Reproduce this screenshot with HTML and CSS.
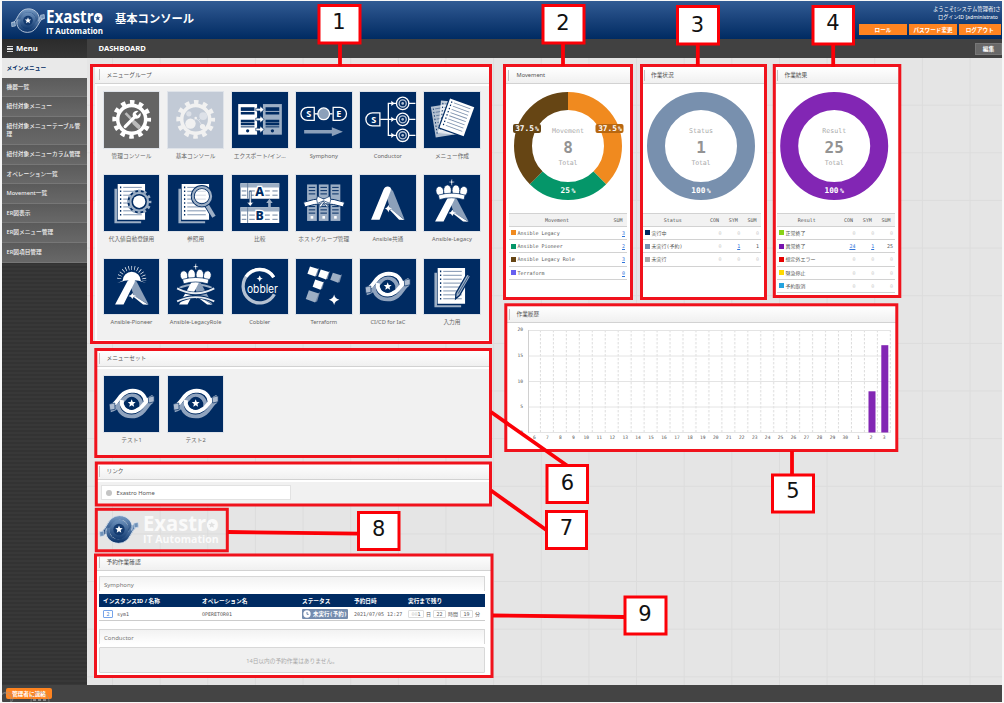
FILE: index.html
```html
<!DOCTYPE html>
<html lang="ja">
<head>
<meta charset="utf-8">
<title>Exastro IT Automation</title>
<link rel="stylesheet" href="styles.css">
</head>
<body>
<svg class="defs" width="0" height="0">
  <defs>
    <linearGradient id="blue" x1="0" y1="0" x2="0" y2="1"><stop offset="0" stop-color="#6f93bd"/><stop offset="1" stop-color="#123a70"/></linearGradient>
    <path id="spark" d="M0-12Q2-2 12 0Q2 2 0 12Q-2 2-12 0Q-2-2 0-12Z"/>
    <path id="star" d="M0-11L2.9-3.9 10.5-3.4 4.7 1.5 6.5 8.9 0 4.9-6.5 8.9-4.7 1.5-10.5-3.4-2.9-3.9Z"/>
    <g id="gear"><circle r="43" fill="none" stroke-width="11" stroke="currentColor"/><circle r="53" fill="none" stroke-width="13" stroke="currentColor" stroke-dasharray="14 13.75" stroke-dashoffset="7"/></g>
    <g id="crown"><ellipse cx="-33" cy="-3" rx="11" ry="14" transform="rotate(-14 -33 0)"/><ellipse cx="33" cy="-3" rx="11" ry="14" transform="rotate(14 33 0)"/><ellipse cx="-12" cy="-5" rx="11" ry="16"/><ellipse cx="12" cy="-5" rx="11" ry="16"/><path d="M-38 8Q0-3 38 8L35 21Q0 10-35 21Z"/><path d="M-2-37H2V-31H7V-27H2V-20H-2V-27H-7V-31H-2Z"/></g>
    <g id="letterA"><path fill="#8ca0ba" d="M85 38Q96 38 102 51L137 137 92 103 78 52Z"/><path fill="#fff" d="M72 45Q77 34 86 35 98 36 94 49L60 137H34Z"/><use href="#spark" x="87" y="103" fill="#fff"/><path fill="#fff" d="M91 107L96 105 136 138 120 137Z"/></g>
    <g id="sheet"><path d="M0 0H84V109H0Z" fill="#fff"/><path d="M17 10H74M17 22H74M17 34H74M17 46H74M17 58H74M17 70H74M17 82H74M17 94H74" stroke="#7d91ae" stroke-width="3"/><path d="M7 10H11M7 22H11M7 34H11M7 46H11M7 58H11M7 70H11M7 82H11M7 94H11" stroke="#002b62" stroke-width="5"/></g>
    <g id="docs"><path d="M32 42H40V142H114V148H32Z" fill="#9dafc5"/><use href="#sheet" x="42" y="28"/></g>
    <g id="eye" fill="none">
      <path stroke="#8fa3be" stroke-width="12" d="M150 77C130 82 128 123 85 124 56 124 42 105 43 84"/>
      <path stroke="#8fa3be" stroke-width="12" d="M20 105C52 100 52 62 86 60 106 60 117 76 114 94"/>
      <path stroke="#fff" stroke-width="12" d="M18 93C45 88 45 46 88 45 112 45 127 60 128 80"/>
      <path stroke="#fff" stroke-width="12" d="M150 65C124 70 121 108 85 109 62 109 52 92 55 74"/>
      <path fill="#aebcd0" stroke="#002b62" stroke-width="2" d="M16 86L33 83 34 102 18 105ZM136 65L154 61 154 79 137 83Z"/>
      <circle cx="85" cy="84" r="20" fill="#002b62"/><use href="#star" fill="#fff" transform="translate(85 84) scale(1.15)"/>
    </g>
    <g id="server"><path d="M0 0H58V94H0Z"/><path d="M8 14H50M8 28H50M8 52H50M8 61H50" stroke="#002b62" stroke-width="8"/><path d="M8 70H50M8 20H50" stroke="#002b62" stroke-width="3"/><circle cx="29" cy="82" r="5" fill="#002b62"/></g>
    <g id="tbl"><path fill="#fff" d="M0 0H119V48H0Z"/><path fill="#9dafc5" d="M0 0H119V13H0Z"/><path stroke="#6b819f" stroke-width="3" d="M4 24H18M27 24H44M75 24H90M98 24H114M4 37H18M27 37H44M75 37H90M98 37H114M22 0V48"/></g>
    <g id="rack"><path fill="#9dafc5" d="M0 0H30V112H0Z"/><path stroke="#002b62" stroke-width="3" d="M5 9H25M5 19H25M5 29H25M5 68H25M5 78H25M5 88H25"/><path fill="#fff" d="M11 97H19V105H11Z"/></g>
    <g id="node"><circle r="19" fill="#002b62" stroke="#fff" stroke-width="4"/><circle r="11" fill="none" stroke="#b7c5d6" stroke-width="4"/><circle r="4" fill="#b7c5d6"/></g>
    <g id="cube"><path fill="#7186a4" d="M31 8L36 5 29 29 23 30Z"/><path d="M8 0L33 8 24 31 0 22Z"/></g>
    <g id="logo"><circle cx="85" cy="84" r="42" fill="url(#blue)"/><path d="M4 105C40 102 36 35 86 34 122 34 140 64 130 91" fill="none" stroke="url(#blue)" stroke-width="17"/><path d="M166 63C130 66 134 133 84 134 48 134 30 104 40 77" fill="none" stroke="url(#blue)" stroke-width="17"/><path d="M3 96C36 92 32 25 87 25 125 25 148 57 139 88" fill="none" stroke="#d5e0ec" stroke-width="4"/><path d="M167 72C134 76 138 143 83 143 45 143 22 111 31 80" fill="none" stroke="#d5e0ec" stroke-width="4"/><circle cx="85" cy="84" r="24" fill="#143b70"/><path d="M3 93L20 91 22 111 4 114ZM148 57L166 54 167 74 150 77Z" fill="#6e91b8" stroke="#d5e0ec" stroke-width="3"/><use href="#star" fill="#fff" transform="translate(85 84) scale(1.5)"/></g>
    <g id="brand"><text class="brand" x="0" y="15" font-size="17.5" textLength="57" lengthAdjust="spacingAndGlyphs">Exastro</text><text class="brand" x="0" y="25.5" font-size="9.2" textLength="57" lengthAdjust="spacingAndGlyphs">IT Automation</text></g>
  </defs>
</svg>

<div class="app">
  <header class="top">
    <svg class="top-logo" viewBox="0 0 170 140"><use href="#logo" y="-16"/></svg>
    <svg class="top-brand" viewBox="0 0 58 28" fill="#fff"><use href="#brand"/><circle cx="51.8" cy="10.2" r="3.6"/><use href="#star" fill="#1f4880" transform="translate(51.8 10.2) scale(.25)"/></svg>
    <h1>基本コンソール</h1>
    <div class="account">
      <div class="welcome">ようこそ[システム管理者]さ</div>
      <div class="welcome second">ログインID [administrato</div>
      <div class="actions"><button>ロール</button><button>パスワード変更</button><button>ログアウト</button></div>
    </div>
  </header>
  <div class="bar"><div class="bar-menu"><i class="burger"></i>Menu</div><div class="bar-title">DASHBOARD</div><button class="edit">編集</button></div>
  <div class="body">
    <nav class="side">
      <a class="on">メインメニュー</a><a>機器一覧</a><a>紐付対象メニュー</a><a class="two">紐付対象メニューテーブル管理</a><a>紐付対象メニューカラム管理</a><a>オペレーション一覧</a><a>Movement一覧</a><a>ER図表示</a><a>ER図メニュー管理</a><a>ER図項目管理</a>
    </nav>
    <main>
      <div class="left">
        <section class="widget group">
          <h2>メニューグループ</h2>
          <div class="tiles">
            <figure><svg class="grey" viewBox="0 0 170 170"><use href="#gear" x="85" y="84" color="#fff"/><path d="M66 65L107 107" stroke="#bbb" stroke-width="8"/><path d="M93 94L106 107" stroke="#bbb" stroke-width="13" stroke-linecap="round"/><path d="M65 106L96 75" stroke="#fff" stroke-width="10" stroke-linecap="round"/><path d="M106 58L97 67 103 73 112 64Q115 75 107 80 98 85 91 78 85 71 90 63 96 55 106 58Z" fill="#fff"/></svg><figcaption>管理コンソール</figcaption></figure>
            <figure><svg class="pale" viewBox="0 0 170 170"><use href="#gear" x="85" y="84" color="#f1f1f1"/><g fill="#f1f1f1"><path d="M70 97L85 82 94 87 108 74M94 87L106 105" fill="none" stroke="#dde1e8" stroke-width="3"/><circle cx="69" cy="97" r="16"/><circle cx="108" cy="74" r="12" fill="#dde1e8"/><circle cx="64" cy="67" r="8" fill="#dde1e8"/><circle cx="106" cy="106" r="8"/><circle cx="85" cy="80" r="4"/></g></svg><figcaption>基本コンソール</figcaption></figure>
            <figure><svg viewBox="0 0 170 170"><use href="#server" x="19" y="37" fill="#fff"/><use href="#server" x="95" y="37" fill="#9dafc5"/><path d="M73 50H86V43L99 54 86 65V58H73ZM73 80H86V73L99 84 86 95V88H73ZM73 111H86V104L99 115 86 126V119H73Z" fill="#fff" stroke="#002b62" stroke-width="2"/></svg><figcaption>エクスポート/イン…</figcaption></figure>
            <figure><svg viewBox="0 0 170 170"><path d="M57 67H112" stroke="#fff" stroke-width="4"/><path d="M35 47H56V87H35A20 20 0 0 1 35 47ZM114 47H135A20 20 0 0 1 135 87H114Z" fill="#002b62" stroke="#fff" stroke-width="4"/><circle cx="85" cy="67" r="18" fill="#8ca0ba" stroke="#fff" stroke-width="4"/><text class="ib" x="39" y="77" font-size="28">S</text><text class="ib" x="131" y="77" font-size="28">E</text><path d="M25 117H110V108L144 122 110 136V127H25Z" fill="#8ca0ba"/></svg><figcaption>Symphony</figcaption></figure>
            <figure><svg viewBox="0 0 170 170"><path d="M62 84H170M87 35V133M85 35H170M85 133H170" fill="none" stroke="#fff" stroke-width="4"/><path d="M96 27L106 35 96 43ZM96 76L106 84 96 92ZM96 125L106 133 96 141Z" fill="#fff"/><path d="M38 64H61V104H38A20 20 0 0 1 38 64Z" fill="#002b62" stroke="#fff" stroke-width="4"/><text class="ib" x="42" y="94" font-size="28">S</text><use href="#node" x="131" y="35"/><use href="#node" x="131" y="84"/><use href="#node" x="131" y="133"/></svg><figcaption>Conductor</figcaption></figure>
            <figure><svg viewBox="0 0 170 170"><g transform="translate(21 45) rotate(-9) scale(.7 .88)" opacity=".7"><use href="#sheet"/></g><g transform="translate(52 26) rotate(5) scale(.75 .92)" opacity=".75"><use href="#sheet"/></g><g transform="translate(80 20) rotate(20) scale(.94 .87)"><path d="M-4-4H88V113H-4Z" fill="#002b62"/><use href="#sheet"/></g></svg><figcaption>メニュー作成</figcaption></figure>
            <figure><svg viewBox="0 0 170 170"><use href="#docs"/><circle cx="108" cy="82" r="36" fill="#002b62"/><use href="#gear" color="#9dafc5" transform="translate(108 82) scale(.63)"/><circle cx="108" cy="82" r="19" fill="#fff"/></svg><figcaption>代入値自動登録用</figcaption></figure>
            <figure><svg viewBox="0 0 170 170"><use href="#docs"/><path d="M118 88L142 128" stroke="#002b62" stroke-width="19"/><path d="M117 88L141 128" stroke="#9dafc5" stroke-width="12"/><circle cx="104" cy="65" r="28" fill="#fff" fill-opacity=".65" stroke="#002b62" stroke-width="12"/><circle cx="104" cy="65" r="28" fill="none" stroke="#9dafc5" stroke-width="7"/></svg><figcaption>参照用</figcaption></figure>
            <figure><svg viewBox="0 0 170 170"><use href="#tbl" x="26" y="25"/><use href="#tbl" x="26" y="99"/><path d="M53 50H59V84H66L56 97 46 84H53Z" fill="#fff" stroke="#002b62" stroke-width="2"/><path d="M111 102H119V86H125L115 73 105 86H111Z" fill="#9dafc5"/><text class="ab" x="85" y="64" font-size="38">A</text><text class="ab" x="85" y="138" font-size="38">B</text></svg><figcaption>比較</figcaption></figure>
            <figure><svg viewBox="0 0 170 170"><use href="#rack" x="34" y="29"/><use href="#rack" x="70" y="29"/><use href="#rack" x="106" y="29"/><path d="M23 84Q85 61 149 84L145 98Q85 78 27 98Z" fill="#fff" stroke="#002b62" stroke-width="3"/><path d="M85 74L66 65Q61 75 66 87L85 79 104 87Q109 75 104 65ZM83 80L69 97 77 98 85 85 94 98 101 97Z" fill="#fff" stroke="#002b62" stroke-width="2"/></svg><figcaption>ホストグループ管理</figcaption></figure>
            <figure><svg viewBox="0 0 170 170"><use href="#letterA"/></svg><figcaption>Ansible共通</figcaption></figure>
            <figure><svg viewBox="0 0 170 170"><g transform="translate(0 36) scale(1 .78)"><use href="#letterA"/></g><use href="#crown" fill="#fff" stroke="#002b62" stroke-width="2" transform="translate(85 53) scale(1.08)"/></svg><figcaption>Ansible-Legacy</figcaption></figure>
            <figure><svg viewBox="0 0 170 170"><g transform="translate(0 33) scale(1 .78)"><use href="#letterA"/></g><path d="M41 74Q85 55 129 74L113 67A28 28 0 0 0 57 67Z" fill="#fff"/><circle cx="85" cy="66" r="39" fill="none" stroke="#fff" stroke-width="13" stroke-dasharray="2 7.1" pathLength="245" clip-path="inset(0 0 50% 0)"/></svg><figcaption>Ansible-Pioneer</figcaption></figure>
            <figure><svg viewBox="0 0 170 170"><path d="M30 91Q85 66 140 91" fill="none" stroke="#9dafc5" stroke-width="6"/><g transform="translate(0 38) scale(1 .74)"><use href="#letterA"/></g><path d="M28 90Q85 122 142 90M28 132Q85 100 142 132" fill="none" stroke="#002b62" stroke-width="11"/><path d="M28 90Q85 120 142 90M28 130Q85 104 142 130" fill="none" stroke="#e6ebf1" stroke-width="6"/><use href="#crown" fill="#fff" stroke="#002b62" stroke-width="2" transform="translate(85 54) scale(1.06)"/></svg><figcaption>Ansible-LegacyRole</figcaption></figure>
            <figure><svg viewBox="0 0 170 170"><path d="M128 56A51 51 0 1 0 130 108" fill="none" stroke="#b4c1d2" stroke-width="10"/><path d="M128 56A51 51 0 0 0 43 54" fill="none" stroke="#fff" stroke-width="10"/><text x="46" y="103" font-family="Inter,sans-serif" font-size="35" fill="#fff" textLength="95" lengthAdjust="spacingAndGlyphs">obbler</text><use href="#spark" fill="#fff" transform="translate(85 60) scale(.8)"/></svg><figcaption>Cobbler</figcaption></figure>
            <figure><svg viewBox="0 0 170 170"><g fill="#fff"><use href="#cube" x="35" y="23"/><use href="#cube" x="68" y="32"/><use href="#cube" x="51" y="63"/></g><g fill="#9dafc5"><use href="#cube" x="105" y="42"/><g transform="translate(30 96) scale(1.2)"><use href="#cube"/></g></g><use href="#spark" fill="#fff" transform="translate(117 125) scale(1.35)"/></svg><figcaption>Terraform</figcaption></figure>
            <figure><svg viewBox="0 0 170 170"><use href="#eye"/></svg><figcaption>CI/CD for IaC</figcaption></figure>
            <figure><svg viewBox="0 0 170 170"><use href="#docs"/><path d="M97 122L98 105 132 46 143 53 109 112Z" fill="#9dafc5" stroke="#002b62" stroke-width="4"/><path d="M105 106L137 52" stroke="#002b62" stroke-width="2"/></svg><figcaption>入力用</figcaption></figure>
          </div>
        </section>
        <section class="widget set">
          <h2>メニューセット</h2>
          <div class="tiles">
            <figure><svg viewBox="0 0 170 170"><use href="#eye"/></svg><figcaption>テスト1</figcaption></figure>
            <figure><svg viewBox="0 0 170 170"><use href="#eye"/></svg><figcaption>テスト2</figcaption></figure>
          </div>
        </section>
        <section class="widget links">
          <h2>リンク</h2>
          <div class="link-area"><a class="link"><i></i>Exastro Home</a></div>
        </section>
        <section class="image-widget">
          <svg class="mark" viewBox="0 0 170 130"><use href="#logo" y="-19"/></svg>
          <svg class="word" viewBox="0 0 58 28" preserveAspectRatio="none" fill="#fafafa"><use href="#brand"/><circle cx="51.8" cy="10.2" r="3.6"/><use href="#star" fill="#e0e0e0" transform="translate(51.8 10.2) scale(.25)"/></svg>
        </section>
        <section class="widget reserve">
          <h2>予約作業確認</h2>
          <h3>Symphony</h3>
          <div class="rt head"><span>インスタンスID / 名称</span><span>オペレーション名</span><span>ステータス</span><span>予約日時</span><span>実行まで残り</span></div>
          <div class="rt row"><span><b class="id">2</b>sym1</span><span>OPERETOR01</span><span><em class="badge"><svg viewBox="0 0 12 12"><circle cx="6" cy="6" r="5.5" fill="#fff"/><path d="M6 3V6.5H8.5" fill="none" stroke="#6b84a8" stroke-width="1.5"/></svg>未実行(予約)</em></span><span>2021/07/05 12:27</span><span class="left-time"><i><u>00</u>1</i>日<i>22</i>時間<i>19</i>分</span></div>
          <h3 class="second">Conductor</h3>
          <div class="none">14日以内の予約作業はありません。</div>
        </section>
      </div>
      <div class="right">
        <div class="pies">
          <section class="widget pie">
            <h2>Movement</h2>
            <svg class="donut" viewBox="-61 -61 122 122">
              <g fill="none" stroke-width="18"><circle r="45" stroke="#f08a1f" pathLength="100" stroke-dasharray="37.5 62.5" transform="rotate(-90)"/><circle r="45" stroke="#059669" pathLength="100" stroke-dasharray="25 75" transform="rotate(45)"/><circle r="45" stroke="#664514" pathLength="100" stroke-dasharray="37.5 62.5" transform="rotate(135)"/></g>
              <rect x="-55" y="-22" width="28" height="9" rx="2" fill="#664514"/><rect x="27.5" y="-22" width="28" height="9" rx="2" fill="#b8670f"/>
              <text class="pc" x="-41" y="-15">37.5<tspan class="sign" dx="1">%</tspan></text><text class="pc" x="42" y="-15">37.5<tspan class="sign" dx="1">%</tspan></text><text class="pc" x="0" y="47">25<tspan class="sign" dx="1.5">%</tspan></text>
              <text class="cap" y="-13" textLength="32">Movement</text><text class="num" y="7">8</text><text class="cap" y="19" textLength="19">Total</text>
            </svg>
            <div class="table one">
              <div class="th"><span>Movement</span><span>SUM</span></div>
              <div><span><i class="c-orange"></i>Ansible Legacy</span><a>3</a></div>
              <div><span><i class="c-green"></i>Ansible Pioneer</span><a>2</a></div>
              <div><span><i class="c-brown"></i>Ansible Legacy Role</span><a>3</a></div>
              <div><span><i class="c-violet"></i>Terraform</span><a>0</a></div>
            </div>
          </section>
          <section class="widget pie">
            <h2>作業状況</h2>
            <svg class="donut" viewBox="-60 -61 122 122"><circle r="45" fill="none" stroke="#7890ae" stroke-width="18"/><text class="cap" y="-13" textLength="24">Status</text><text class="num" y="7">1</text><text class="cap" y="19" textLength="19">Total</text><text class="pc" x="0" y="47">100<tspan class="sign" dx="1.5">%</tspan></text></svg>
            <div class="table">
              <div class="th"><span>Status</span><span>CON</span><span>SYM</span><span>SUM</span></div>
              <div><span><i class="c-navy"></i>実行中</span><s>0</s><s>0</s><s>0</s></div>
              <div><span><i class="c-steel"></i>未実行(予約)</span><s>0</s><a>1</a><b>1</b></div>
              <div><span><i class="c-grey"></i>未実行</span><s>0</s><s>0</s><s>0</s></div>
            </div>
          </section>
          <section class="widget pie">
            <h2>作業結果</h2>
            <svg class="donut" viewBox="-59.2 -61 122 122"><circle r="45" fill="none" stroke="#8226b4" stroke-width="18"/><text class="cap" y="-13" textLength="24">Result</text><text class="num" y="7">25</text><text class="cap" y="19" textLength="19">Total</text><text class="pc" x="0" y="47">100<tspan class="sign" dx="1.5">%</tspan></text></svg>
            <div class="table">
              <div class="th"><span>Result</span><span>CON</span><span>SYM</span><span>SUM</span></div>
              <div><span><i class="c-lime"></i>正常終了</span><s>0</s><s>0</s><s>0</s></div>
              <div><span><i class="c-purple"></i>異常終了</span><a>24</a><a>1</a><b>25</b></div>
              <div><span><i class="c-red"></i>想定外エラー</span><s>0</s><s>0</s><s>0</s></div>
              <div><span><i class="c-yellow"></i>緊急停止</span><s>0</s><s>0</s><s>0</s></div>
              <div><span><i class="c-sky"></i>予約取消</span><s>0</s><s>0</s><s>0</s></div>
            </div>
          </section>
        </div>
        <section class="widget history">
          <h2>作業履歴</h2>
          <div class="chart">
            <div class="ylab"><span>20</span><span>15</span><span>10</span><span>5</span><span>0</span></div>
            <svg class="plot" viewBox="0 0 363 103">
              <defs><pattern id="dash" width="12.96" height="4" patternUnits="userSpaceOnUse"><path d="M12.4 0V2.4" stroke="#d8d8d8" stroke-width=".9"/></pattern></defs>
              <rect width="363" height="102.5" fill="url(#dash)"/>
              <path d="M0 .5H363M0 26H363M0 51.5H363M0 77H363M0 102.5H363" stroke="#e4e4e4"/><path d="M.5 0V103" stroke="#d0d0d0"/>
              <rect x="340.5" y="61.3" width="7" height="41.2" fill="#8226b4"/><rect x="353.3" y="15.2" width="7" height="87.3" fill="#8226b4"/>
            </svg>
            <div class="xlab"><span>6</span><span>7</span><span>8</span><span>9</span><span>10</span><span>11</span><span>12</span><span>13</span><span>14</span><span>15</span><span>16</span><span>17</span><span>18</span><span>19</span><span>20</span><span>21</span><span>22</span><span>23</span><span>24</span><span>25</span><span>26</span><span>27</span><span>28</span><span>29</span><span>30</span><span>1</span><span>2</span><span>3</span></div>
          </div>
        </section>
      </div>
    </main>
  </div>
  <footer><button>管理者に連絡</button><svg viewBox="0 0 50 17"><g fill="none" stroke="#999" stroke-opacity=".55"><circle cx="5" cy="13" r="6"/><circle cx="2" cy="15" r="7"/><circle cx="38" cy="16" r="9"/><path d="M31 15H45" stroke="#bbb" stroke-width="2" stroke-dasharray="3 2"/></g></svg></footer>
</div>

<svg class="notes" width="1004" height="703" viewBox="0 0 1004 703">
  <g fill="none" stroke="#f0121c" stroke-width="3">
    <rect x="91.5" y="65.5" width="399" height="277"/><rect x="504.5" y="65.5" width="127" height="233"/><rect x="641.5" y="65.5" width="124" height="233"/><rect x="774.3" y="65.5" width="125.5" height="231"/>
    <rect x="505.8" y="304.8" width="391" height="145.7"/><rect x="95.8" y="349.5" width="394.7" height="107"/><rect x="96.3" y="463" width="394.2" height="42"/><rect x="96.3" y="509.3" width="131" height="41.5"/><rect x="95.5" y="555" width="396.5" height="121.5"/>
  </g>
  <g stroke="#fb0007" stroke-width="3.8">
    <path d="M340 43V66M563 43V66M697.8 44V66M833.2 44V67M792 451V475M491 412L567 465.5M491 490.5L547 530.5M228 532L359 533.7M493 615.5L625 617"/>
    <g fill="#fff" stroke-width="3"><rect x="319" y="5.5" width="41" height="37.5"/><rect x="543" y="5.5" width="41" height="37.5"/><rect x="677.5" y="6.5" width="41" height="37.5"/><rect x="813" y="6.5" width="40.5" height="37.5"/><rect x="772.5" y="475" width="41" height="37"/><rect x="547" y="465.5" width="40.5" height="37"/><rect x="546.5" y="511.5" width="40" height="37"/><rect x="358.5" y="512.5" width="40.5" height="37"/><rect x="625" y="597" width="41" height="37"/></g>
  </g>
  <g class="n"><text x="339" y="29">1</text><text x="563" y="29.5">2</text><text x="697.5" y="31.5">3</text><text x="833" y="29.5">4</text><text x="793" y="498">5</text><text x="567.5" y="489.5">6</text><text x="566.5" y="534.5">7</text><text x="378.7" y="536">8</text><text x="645" y="620.5">9</text></g>
</svg>
</body>
</html>
```
FILE: styles.css
```css
*{box-sizing:border-box}
body{margin:0;width:1004px;height:703px;overflow:hidden;position:relative;background:#f7f7f7;font-family:"Noto Sans","Noto Sans CJK JP",sans-serif;font-size:5.7px;color:#555}
h1,h2,h3,figure{margin:0;font-weight:400}
button{font:inherit;color:#fff;border:0;padding:0;white-space:nowrap;flex:none}
.defs{display:block;position:absolute}
.app{margin:1px 2px 0;width:1000px;height:701px;overflow:hidden;display:flex;flex-direction:column}
.brand{font-family:"Open Sans","Noto Sans",sans-serif;font-weight:700}
.top{height:38px;flex:none;display:flex;background:linear-gradient(#315b94,#1b447c 45%,#002b62);overflow:hidden}
.top-logo{width:34px;height:28px;margin:6px 0 0 9px;overflow:visible;flex:none}
.top-brand{width:58px;height:28px;margin:7px 0 0 1px;flex:none}
.top h1{font-size:11.3px;font-weight:700;color:#fff;line-height:16px;margin:10px 0 0 11px;white-space:nowrap;flex:none}
.account{margin-left:auto;width:143px;color:#fff;padding-top:4px;flex:none}
.welcome{margin-left:74px;line-height:8px;white-space:nowrap;font-size:5.35px}
.welcome.second{margin-left:79px;font-size:5.15px}
.actions{display:flex;gap:2px;margin-top:3px}
.actions button{width:48px;height:11px;line-height:10px;background:#ff8420;font-weight:700;font-size:5.6px}
.actions button:last-child{width:41.5px;flex:none}
.bar{height:19px;flex:none;display:flex;background:#414141;color:#fff;font-weight:700;line-height:19px}
.bar-menu{width:85px;background:linear-gradient(#2b2b2b,#363636);font-size:7.7px;display:flex;align-items:center;padding-left:5px;gap:3px}
.burger{width:6px;height:6px;border-top:1px solid #ddd;border-bottom:1px solid #ddd;background:linear-gradient(transparent 37%,#ddd 37%,#ddd 63%,transparent 63%)}
.bar-title{padding-left:11.5px;font-size:7.6px}
.edit{margin:4px 0 0 auto;width:27px;height:12px;line-height:10px;background:#686868;border:1px solid #777;font-weight:700}
.body{flex:1;display:flex;min-height:0}
.side{width:85px;background:repeating-linear-gradient(#333 0 2px,#383838 2px 4px);flex:none;color:#eee}
.side a{display:flex;align-items:center;height:19.6px;padding:0 5px 0 4.5px;line-height:8.4px;font-weight:500;background:linear-gradient(#5b5b5b,#686868);border-bottom:1px solid #777;word-break:break-all}
.side a.two{height:28.2px}
.side a.on{background:#e9e9e9;color:#002b62;font-weight:700;border-bottom:0}
main{flex:1;display:flex;background-color:#e5e5e5;background-image:linear-gradient(90deg,#dcdcdc 1px,transparent 1px),linear-gradient(#dcdcdc 1px,transparent 1px);background-size:47.65px 47.65px;background-position:25px 0,0 -1px}
.left{width:419px;flex:none;padding:8px 0 0 10px}
.right{flex:1;padding-top:9px}
.widget{background:#fff;color:#555;overflow:hidden}
.widget h2{height:17px;font-size:5.7px;line-height:16px;padding-left:9.5px;position:relative;background:linear-gradient(#fff,#f0f0f0);border-bottom:1px solid #d2d2d2;display:flex;align-items:center}
.widget h2::before{content:"";position:absolute;left:2px;top:3px;width:1px;height:11px;background:#c2c2c2}
.group{width:394px;height:276px;margin-left:-2px}
.group h2{padding-left:11.5px;height:18px}
.group h2::before{left:4px}
.tiles{display:grid;grid-template-columns:repeat(6,64.1px);grid-auto-rows:83.2px;background:#f1f1f1;margin:2px 0 0 2px;height:254px;padding:5.2px 0 0 6px}
.tiles svg{display:block;width:57.4px;height:57.4px;background:#002b62;border:.5px solid #dfe3e9}
.tiles svg.grey{background:#646464}
.tiles svg.pale{background:#c2cad6}
figcaption{width:57px;line-height:9px;margin-top:3.5px;display:flex;justify-content:center;white-space:nowrap;color:#666}
.ib{fill:#fff;font-weight:700;text-anchor:middle}
.ab{fill:#002b62;stroke:#fff;stroke-width:8px;paint-order:stroke;font-weight:800;text-anchor:middle}
.set{width:392px;height:106px;margin-top:8px}
.set .tiles{margin-left:0;height:87px;padding-top:6.4px}
.links{width:392px;height:41px;margin-top:7px}
.link-area{background:#f1f1f1;margin-top:1.5px;height:22px;padding:3.5px}
.link{width:190px;height:15px;border:1px solid #e2e2e2;background:#fff;display:flex;align-items:center;padding-left:4px;gap:5px;font-size:5.8px}
.link i{width:6px;height:6px;border-radius:50%;background:#c4c4c4}
.image-widget{height:41px;margin-top:5px;display:flex;align-items:center;padding:0 0 0 2px;gap:4px}
.mark{width:40px;height:31px}
.word{width:77px;height:33px}
.reserve{width:394px;height:121px;margin-top:4px;padding:0 6px 0 2px}
.reserve h2{margin:0 -6px 0 -2px;line-height:12px}
.reserve h3{height:15px;margin:5px 0 3px;padding-left:4px;line-height:16px;font-size:6px;border:1px solid #d7d7d7;border-bottom:0;background:linear-gradient(#f2f2f2,#fff);color:#777}
.reserve h3.second{margin-top:8px}
.rt{display:grid;grid-template-columns:99px 100px 52px 54px 1fr;align-items:center;padding-left:4px;white-space:nowrap}
.rt.head{background:#002b62;color:#fff;font-weight:700;height:13px}
.rt.row{height:14px;border-bottom:1px solid #ccc;font:5px "DejaVu Sans Mono","Noto Sans CJK JP",monospace}
.rt span{display:flex;align-items:center}
.id{width:10px;height:8px;border:1px solid #76a4ea;border-radius:1px;margin-right:4px;font-weight:400;line-height:6px;text-align:center;color:#37c}
.badge{background:#748cae;color:#fff;font-style:normal;font-weight:700;font-size:5.5px;height:10px;width:46px;display:flex;align-items:center;gap:2px;padding-left:1px;border-radius:1px}
.badge svg{width:8px;height:8px}
.rt .left-time{gap:2px}
.left-time i{font-style:normal;width:13px;height:8px;border:1px solid #ddd;border-radius:1px;display:flex;align-items:center;justify-content:center}
.left-time i:first-child{width:16px}
.left-time u{text-decoration:none;color:#ccc}
.none{height:26px;background:#f0f0f0;border:1px solid #d8d8d8;border-radius:1px;display:flex;align-items:center;justify-content:center;color:#aaa}
.pies{display:flex;height:230px}
.pie{width:124px;flex:none;padding:0 3px;display:flex;flex-direction:column}
.pie h2{margin:0 -3px;width:auto;flex:none;padding-left:10.5px}
.pie+.pie{margin-left:13px;width:121px;padding:0 3px 0 0}
.pie+.pie h2{margin:0 -3px 0 0;padding-left:8px}
.pie+.pie h2::before{left:1px}
.pie+.pie+.pie{width:122px;margin-left:12px;padding:0 3px 0 1px}
.pie+.pie+.pie h2{margin-left:-1px;padding-left:8.5px}
.donut{width:122px;height:122px;margin:1px 0 5.5px;flex:none;align-self:center}
.pie+.pie .donut{margin-right:-2px;margin-left:-2px}
.donut text{font-family:"DejaVu Sans Mono","Noto Sans CJK JP",monospace;text-anchor:middle}
.donut .cap{font-size:6.6px;fill:#aaa}
.donut .num{font-size:16px;font-weight:700;fill:#939393}
.donut .pc{font-size:7.8px;font-weight:700;fill:#fff}
.donut .sign{font-size:6.5px}
.table{font:5px/12px "DejaVu Sans Mono","Noto Sans CJK JP",monospace;border-top:1px solid #d2d2d2;width:118px}
.table>div{display:grid;grid-template-columns:1fr 18.8px 18.8px 18.8px;height:13.25px;border-bottom:1px solid #d2d2d2;text-align:right;padding-right:2px;align-items:center}
.table.one>div{grid-template-columns:1fr 20px}
.table .th{background:#f2f2f2}
.th span{display:block;text-align:right;padding-right:2.5px}
.th span:first-child{text-align:center;padding:0}
.table span:first-child{white-space:nowrap}
.table div:not(.th) span{display:flex;align-items:center;gap:2px;padding-left:1.5px;font-size:5px}
.table i{width:5px;height:5px}
.table s{text-decoration:none;color:#ccc}
.table b{font-weight:400}
.table a{color:#2f74da;text-decoration:underline}
.c-orange{background:#f08a1f}.c-green{background:#059669}.c-brown{background:#664514}.c-violet{background:#665ff0}.c-navy{background:#002b62}.c-steel{background:#7890ae}.c-grey{background:#aaa}.c-lime{background:#88d218}.c-purple{background:#7614ad}.c-red{background:#e60000}.c-yellow{background:#ffd900}.c-sky{background:#25a3de}
.history{width:390px;height:144px;margin:9px 0 0 1px}
.history h2{height:17px}
.chart{display:grid;grid-template-columns:17px 363px;padding:7px 0 0 4px;font:4.6px/6px "DejaVu Sans Mono",monospace}
.ylab{height:109px;margin-top:-3px;display:flex;flex-direction:column;justify-content:space-between;text-align:right;padding-right:5px}
.plot{width:363px;height:103px}
.xlab{grid-column:2;display:grid;grid-template-columns:repeat(28,12.96px);text-align:center;margin-top:-1px}
footer{height:17px;flex:none;background:#444;padding:3px 0 0 4px;position:relative}
footer button{display:block;width:46px;height:11px;line-height:10px;border-radius:2px;background:#ff8420;font-weight:700}
footer svg{position:absolute;left:0;top:0;width:50px;height:17px}
.notes{position:absolute;left:0;top:0;pointer-events:none}
.n text{font:21px "DejaVu Sans",sans-serif;text-anchor:middle;fill:#111}
```
